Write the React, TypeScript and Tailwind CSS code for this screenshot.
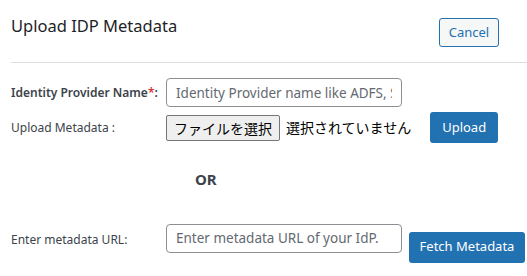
export default function App() {
  return (
    <div className="min-h-[276px] w-[527px] bg-white font-['Segoe_UI','Noto_Sans','Noto_Sans_CJK_JP',sans-serif] text-[#2c3338]">
      <div className="flex items-start justify-between pl-[11px] pr-[28px] pt-[14px]">
        <h2 className="text-[16.5px] leading-[24px] text-[#1d2327]">Upload IDP Metadata</h2>
        <button className="mt-[4px] h-[29px] w-[60px] rounded-[3px] border border-[#2271b1] bg-[#f6f7f7] text-[13px] text-[#2271b1]">
          Cancel
        </button>
      </div>
      <hr className="ml-[11px] mt-[15px] border-t border-[#dcdcde]" />

      <div className="pl-[11px]">
        <div className="mt-[15px] flex items-center">
          <label className="w-[155px] whitespace-nowrap text-[12px] font-semibold text-[#3c434a]">
            Identity Provider Name<span className="text-[#d63638]">*</span>:
          </label>
          <input
            className="h-[29px] w-[236px] rounded-[4px] border border-[#8c8f94] px-[9px] text-[13.5px] placeholder:text-[#646970]"
            placeholder="Identity Provider name like ADFS, SimpleSAML"
          />
        </div>

        <div className="mt-[5px] flex items-center">
          <span className="w-[155px] whitespace-nowrap text-[12px] text-[#3c434a]">Upload Metadata :</span>
          <button className="h-[26px] rounded-[2px] border border-[#767676] bg-[#efefef] px-[7px] font-['Noto_Sans_CJK_JP',sans-serif] text-[14px] leading-none text-black">
            ファイルを選択
          </button>
          <span className="ml-[6px] font-['Noto_Sans_CJK_JP',sans-serif] text-[14px] text-black">選択されていません</span>
          <button className="ml-[19px] h-[31px] w-[68px] rounded-[3px] bg-[#2271b1] text-[13px] text-white">Upload</button>
        </div>

        <div className="mt-[25px] pl-[184px] text-[15px] font-bold text-[#3c434a]">OR</div>

        <div className="mt-[33px] flex items-start">
          <span className="mt-[7px] w-[155px] whitespace-nowrap text-[12px] text-[#3c434a]">Enter metadata URL:</span>
          <input
            className="h-[29px] w-[236px] rounded-[4px] border border-[#8c8f94] px-[9px] text-[13.5px] placeholder:text-[#646970]"
            placeholder="Enter metadata URL of your IdP."
          />
          <button className="ml-[7px] mt-[8px] h-[31px] w-[116px] rounded-[3px] bg-[#2271b1] text-[13px] text-white">
            Fetch Metadata
          </button>
        </div>
      </div>
    </div>
  );
}
